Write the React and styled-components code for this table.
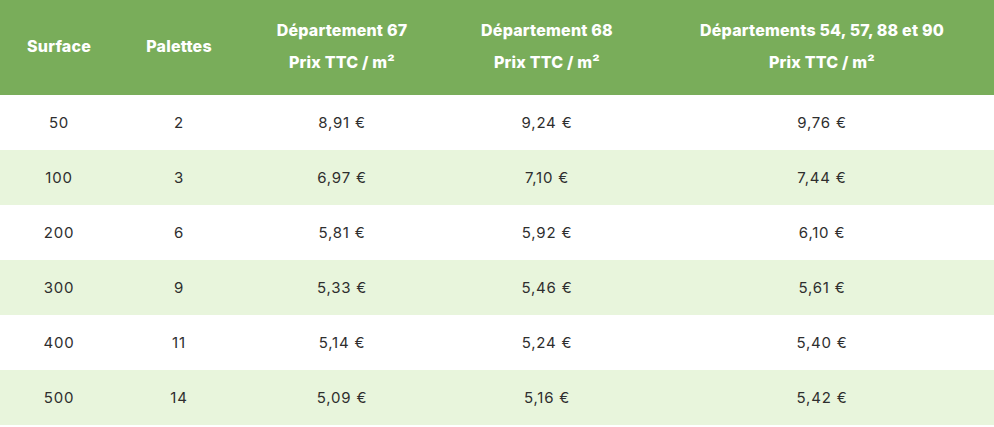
import styled, { createGlobalStyle } from "styled-components";

const Global = createGlobalStyle`
  body {
    margin: 0;
    background: #fff;
    font-family: "Inter", "Noto Sans", sans-serif;
  }
`

const Table = styled.table`
  width: 994px;
  border-collapse: collapse;
  table-layout: fixed;
`

const Th = styled.th`
  background: #79ad5a;
  color: #fff;
  font-size: 16px;
  font-weight: 800;
  line-height: 32px;
  padding: 14px 0 17px;
  text-align: center;
  vertical-align: middle;
  letter-spacing: 0.2px;
`

const Row = styled.tr`
  background: ${p => (p.$alt ? "#e8f5dc" : "#fff")};
`

const Td = styled.td`
  height: 55px;
  padding: 0;
  text-align: center;
  vertical-align: middle;
  color: #2e2e2e;
  font-size: 15px;
  font-weight: 400;
  letter-spacing: 0.8px;
`

const rows = [
  ["50", "2", "8,91 €", "9,24 €", "9,76 €"],
  ["100", "3", "6,97 €", "7,10 €", "7,44 €"],
  ["200", "6", "5,81 €", "5,92 €", "6,10 €"],
  ["300", "9", "5,33 €", "5,46 €", "5,61 €"],
  ["400", "11", "5,14 €", "5,24 €", "5,40 €"],
  ["500", "14", "5,09 €", "5,16 €", "5,42 €"],
]

const widths = [118, 122, 204, 206, 344]

const App = () => {
  return (
    <>
      <Global />
      <Table>
        <colgroup>
          {widths.map((w, i) => <col key={i} style={{ width: w }} />)}
        </colgroup>
        <thead>
          <tr>
            <Th>Surface</Th>
            <Th>Palettes</Th>
            <Th>Département 67<br />Prix TTC / m²</Th>
            <Th>Département 68<br />Prix TTC / m²</Th>
            <Th>Départements 54, 57, 88 et 90<br />Prix TTC / m²</Th>
          </tr>
        </thead>
        <tbody>
          {rows.map((r, i) => (
            <Row key={i} $alt={i % 2 === 1}>
              {r.map((c, j) => <Td key={j}>{c}</Td>)}
            </Row>
          ))}
        </tbody>
      </Table>
    </>
  )
}

export default App;
